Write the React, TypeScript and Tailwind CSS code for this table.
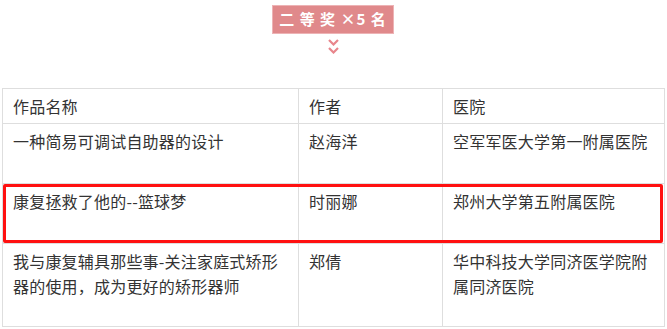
import React from 'react';

const rows = [
  { title: '一种简易可调试自助器的设计', author: '赵海洋', hospital: '空军军医大学第一附属医院', h: 'h-[60px]' },
  { title: '康复拯救了他的--篮球梦', author: '时丽娜', hospital: '郑州大学第五附属医院', h: 'h-[60px]', marked: true },
  { title: '我与康复辅具那些事-关注家庭式矫形器的使用，成为更好的矫形器师', author: '郑倩', hospital: '华中科技大学同济医学院附属同济医院', h: 'h-[83px]' },
];

function Chevron() {
  return (
    <svg width="11" height="7" viewBox="0 0 11 7" className="block">
      <path d="M1 1 L5.5 5.5 L10 1" fill="none" stroke="#e8868c" strokeWidth="2.2" />
    </svg>
  );
}

export default function App() {
  const cell = 'border border-[#dedede] px-[10px] pt-[5px] align-top leading-[25px]';

  return (
    <div
      className="w-[667px] h-[329px] overflow-hidden bg-white text-[16px] text-[#333] tracking-[0.2px]"
      style={{ fontFamily: '"Microsoft YaHei", "Noto Sans CJK SC", sans-serif' }}
    >
      <div className="flex flex-col items-center h-[88px] pt-[5px]">
        <div className="ml-[-1px] w-[122px] h-[29px] bg-[#e0898b] border border-[#edb3b5] flex items-center justify-center text-white font-bold text-[15px] tracking-[1px]">
          二 等 奖 ×5 名
        </div>
        <div className="mt-[5px] flex flex-col items-center gap-[1px]">
          <Chevron />
          <Chevron />
        </div>
      </div>

      <div className="relative pl-[2px]">
        <table className="w-[662px] border-collapse table-fixed">
          <colgroup>
            <col className="w-[296px]" />
            <col className="w-[144px]" />
            <col className="w-[222px]" />
          </colgroup>
          <tbody>
            <tr className="h-[35px]">
              <td className={cell}>作品名称</td>
              <td className={cell}>作者</td>
              <td className={cell}>医院</td>
            </tr>
            {rows.map(r => (
              <tr key={r.title} className={r.h}>
                <td className={cell}>{r.title}</td>
                <td className={cell}>{r.author}</td>
                <td className={cell}>{r.hospital}</td>
              </tr>
            ))}
          </tbody>
        </table>
        <div className="absolute left-[3px] top-[96px] w-[660px] h-[59px] border-[3px] border-[#ff1010] rounded-[2px] pointer-events-none" />
      </div>
    </div>
  );
}
